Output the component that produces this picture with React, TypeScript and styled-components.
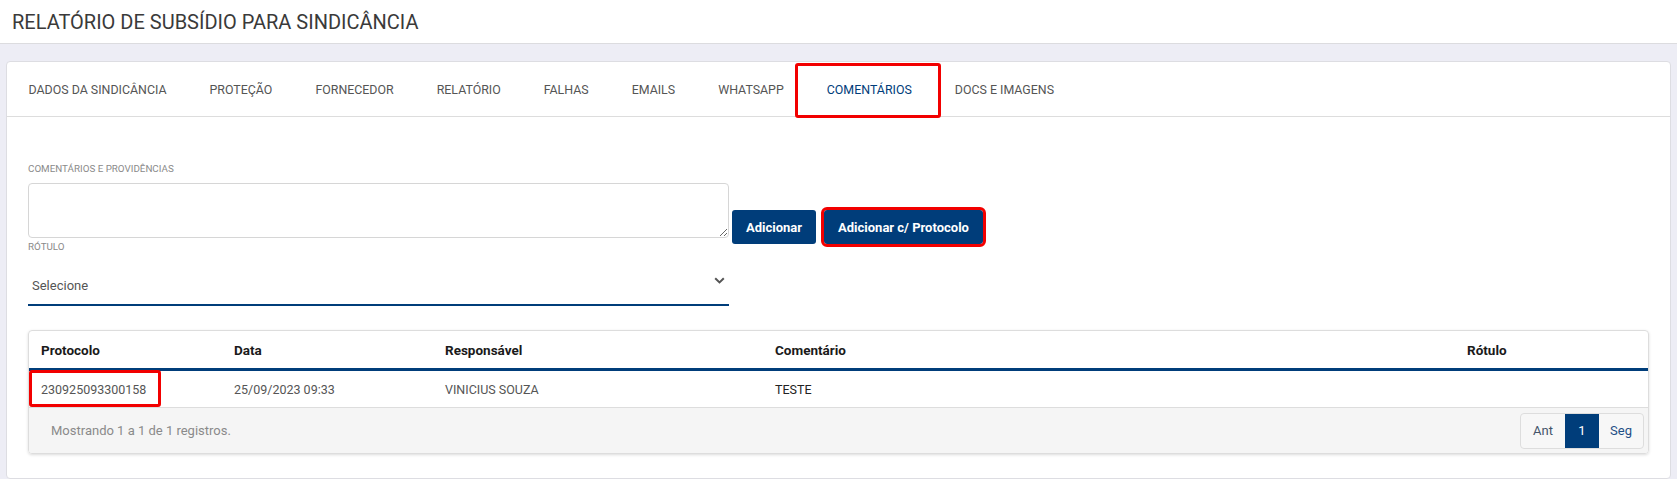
import styled, { createGlobalStyle } from 'styled-components'

const NAVY = '#003d7a'
const MARK = '#f20000'

const GlobalStyle = createGlobalStyle`
  body {
    margin: 0;
    background: #ffffff;
    font-family: Roboto, 'Liberation Sans', sans-serif;
    color: #555555;
  }
`

const TopBar = styled.header`
  height: 43px;
  display: flex;
  align-items: center;
  padding: 0 12px;
  border-bottom: 1px solid #dcdcdf;
  background: #ffffff;
`

const Title = styled.h1`
  margin: 0;
  font-size: 20px;
  font-weight: 400;
  color: #3a3a3a;
`

const Content = styled.main`
  background: #ededf5;
  padding: 17px 6px 0;
`

const Card = styled.section`
  background: #ffffff;
  border: 1px solid #dddde2;
  border-radius: 4px;
`

const Tabs = styled.nav`
  display: flex;
  height: 54px;
  border-bottom: 1px solid #dddddd;
`

const Tab = styled.div<{ $active?: boolean }>`
  position: relative;
  display: flex;
  align-items: center;
  padding: 0 21.5px;
  font-size: 12.4px;
  color: ${({ $active }) => ($active ? NAVY : '#555555')};
`

const TabMark = styled.span`
  position: absolute;
  top: 1px;
  bottom: -2px;
  left: -10px;
  right: -8px;
  border: 3px solid ${MARK};
  border-radius: 3px;
`

const Body = styled.div`
  padding: 45px 21px 24px;
`

const FormRow = styled.div`
  display: flex;
  align-items: flex-start;
`

const Field = styled.div`
  width: 701px;
`

const Label = styled.label`
  display: block;
  font-size: 9.8px;
  line-height: 14px;
  color: #8a8a8a;
`

const TextArea = styled.textarea`
  display: block;
  box-sizing: border-box;
  width: 100%;
  height: 55px;
  margin: 7px 0 2px;
  border: 1px solid #d6d6d6;
  border-radius: 4px;
  resize: vertical;
  font-family: inherit;
`

const SelectBox = styled.div`
  box-sizing: border-box;
  height: 40px;
  margin-top: 12px;
  display: flex;
  align-items: center;
  justify-content: space-between;
  padding: 0 4px 0 4px;
  border-bottom: 2px solid ${NAVY};
  font-size: 13px;
  color: #555555;

  svg {
    margin-bottom: 10px;
  }
`

const Buttons = styled.div`
  display: flex;
  margin-top: 48px;
  margin-left: 3px;
  gap: 8px;
`

const Button = styled.button<{ $marked?: boolean }>`
  height: 34px;
  padding: 0 14px;
  border: none;
  border-radius: 3px;
  background: ${NAVY};
  color: #ffffff;
  font-family: inherit;
  font-size: 13px;
  font-weight: 700;
  cursor: pointer;
  outline: ${({ $marked }) => ($marked ? `3px solid ${MARK}` : 'none')};
  outline-offset: 0;
`

const TableCard = styled.div`
  margin-top: 24px;
  border: 1px solid #dddddd;
  border-radius: 4px;
  box-shadow: 0 1px 3px rgba(0, 0, 0, 0.14);
  overflow: hidden;
`

const Table = styled.table`
  width: 100%;
  border-collapse: collapse;
  table-layout: fixed;
`

// widths are content widths, the 12px side padding comes on top
const Th = styled.th<{ $width?: number }>`
  width: ${({ $width }) => ($width ? `${$width - 24}px` : 'auto')};
  height: 37px;
  padding: 0 12px;
  text-align: left;
  font-size: 13.5px;
  font-weight: 700;
  color: #1a1a1a;
  border-bottom: 3px solid ${NAVY};
`

const Td = styled.td<{ $strong?: boolean }>`
  position: relative;
  height: 36px;
  padding: 0 12px;
  font-size: 12.5px;
  color: ${({ $strong }) => ($strong ? '#222222' : '#555555')};
  border-bottom: 1px solid #dddddd;
`

const CellMark = styled.span`
  position: absolute;
  left: 0;
  top: -1px;
  bottom: 0;
  width: 132px;
  box-sizing: border-box;
  border: 3px solid ${MARK};
  border-radius: 3px;
`

const Footer = styled.div`
  display: flex;
  align-items: center;
  justify-content: space-between;
  height: 45px;
  padding: 0 4px 0 22px;
  background: #f5f5f5;
  font-size: 13px;
  color: #8a8a8a;
`

const Pager = styled.div`
  display: flex;
  height: 34px;
  border: 1px solid #dddddd;
  border-radius: 4px;
  overflow: hidden;
  background: #f7f7f7;
`

const PageItem = styled.span<{ $active?: boolean; $muted?: boolean }>`
  display: flex;
  align-items: center;
  justify-content: center;
  min-width: ${({ $active }) => ($active ? 34 : 44)}px;
  font-size: 13px;
  background: ${({ $active }) => ($active ? NAVY : 'transparent')};
  color: ${({ $active, $muted }) =>
    $active ? '#ffffff' : $muted ? '#44546a' : '#1f4f86'};
`

const tabs = [
  'DADOS DA SINDICÂNCIA',
  'PROTEÇÃO',
  'FORNECEDOR',
  'RELATÓRIO',
  'FALHAS',
  'EMAILS',
  'WHATSAPP',
  'COMENTÁRIOS',
  'DOCS E IMAGENS',
]

const Chevron = () => (
  <svg width="11" height="7" viewBox="0 0 11 7" fill="none">
    <path d="M1.2 1.2 5.5 5.4 9.8 1.2" stroke="#555" strokeWidth="2" />
  </svg>
)

export default function App() {
  return (
    <>
      <GlobalStyle />
      <TopBar>
        <Title>RELATÓRIO DE SUBSÍDIO PARA SINDICÂNCIA</Title>
      </TopBar>
      <Content>
        <Card>
          <Tabs>
            {tabs.map((tab) => (
              <Tab key={tab} $active={tab === 'COMENTÁRIOS'}>
                {tab}
                {tab === 'COMENTÁRIOS' && <TabMark />}
              </Tab>
            ))}
          </Tabs>
          <Body>
            <FormRow>
              <Field>
                <Label>COMENTÁRIOS E PROVIDÊNCIAS</Label>
                <TextArea />
                <Label>RÓTULO</Label>
                <SelectBox>
                  <span>Selecione</span>
                  <Chevron />
                </SelectBox>
              </Field>
              <Buttons>
                <Button>Adicionar</Button>
                <Button $marked>Adicionar c/ Protocolo</Button>
              </Buttons>
            </FormRow>
            <TableCard>
              <Table>
                <thead>
                  <tr>
                    <Th $width={193}>Protocolo</Th>
                    <Th $width={211}>Data</Th>
                    <Th $width={330}>Responsável</Th>
                    <Th $width={692}>Comentário</Th>
                    <Th>Rótulo</Th>
                  </tr>
                </thead>
                <tbody>
                  <tr>
                    <Td>
                      230925093300158
                      <CellMark />
                    </Td>
                    <Td>25/09/2023 09:33</Td>
                    <Td>VINICIUS SOUZA</Td>
                    <Td $strong>TESTE</Td>
                    <Td />
                  </tr>
                </tbody>
              </Table>
              <Footer>
                <span>Mostrando 1 a 1 de 1 registros.</span>
                <Pager>
                  <PageItem $muted>Ant</PageItem>
                  <PageItem $active>1</PageItem>
                  <PageItem>Seg</PageItem>
                </Pager>
              </Footer>
            </TableCard>
          </Body>
        </Card>
      </Content>
    </>
  )
}
